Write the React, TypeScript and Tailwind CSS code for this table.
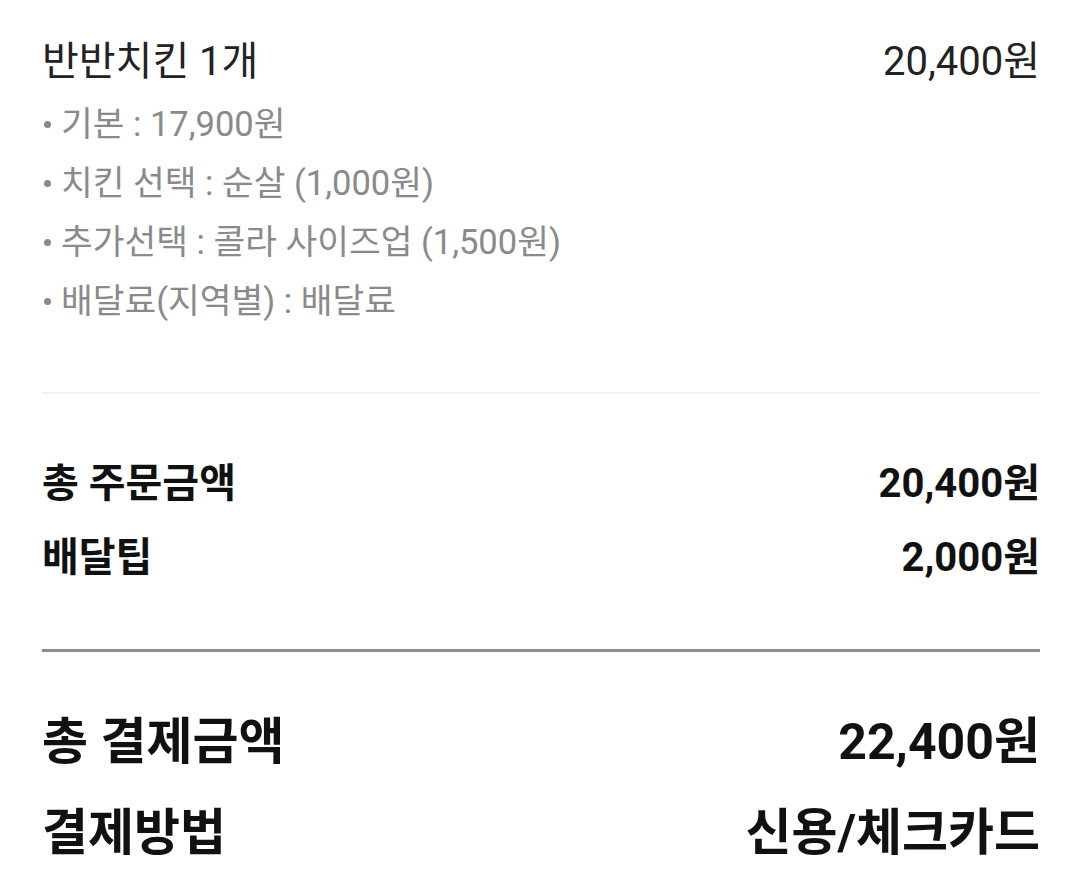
import React from 'react'

const font = { fontFamily: 'Roboto, "Noto Sans CJK KR", sans-serif' }

const options = [
  '기본 : 17,900원',
  '치킨 선택 : 순살 (1,000원)',
  '추가선택 : 콜라 사이즈업 (1,500원)',
  '배달료(지역별) : 배달료',
]

const SummaryRow = ({ label, value }: { label: string; value: string }) => (
  <div className="flex h-[74px] items-center justify-between text-[40px] font-bold text-[#111111]">
    <span>{label}</span>
    <span>{value}</span>
  </div>
)

const TotalRow = ({ label, value }: { label: string; value: string }) => (
  <div className="flex h-[91px] items-center justify-between text-[50px] font-bold text-[#111111]">
    <span>{label}</span>
    <span>{value}</span>
  </div>
)

export default function App() {
  return (
    <div className="min-h-[895px] bg-white pl-[42px] pr-[40px]" style={font}>
      <section className="border-b-2 border-[#f2f2f2] pt-[32px] pb-[61px]">
        <div className="flex h-[60px] items-center justify-between text-[40px] text-[#222222]">
          <span>반반치킨 1개</span>
          <span>20,400원</span>
        </div>
        <ul className="mt-[3px] text-[34.5px] text-[#8a8a8a]">
          {options.map((o) => (
            <li key={o} className="flex h-[59px] items-center">
              <span className="mr-[10px] ml-[2px] h-[7px] w-[7px] rounded-full bg-[#8a8a8a]" />
              {o}
            </li>
          ))}
        </ul>
      </section>

      <section className="border-b-[3px] border-[#8c8c8c] pt-[53px] pb-[54px]">
        <SummaryRow label="총 주문금액" value="20,400원" />
        <SummaryRow label="배달팁" value="2,000원" />
      </section>

      <section className="pt-[45px]">
        <TotalRow label="총 결제금액" value="22,400원" />
        <TotalRow label="결제방법" value="신용/체크카드" />
      </section>
    </div>
  )
}
